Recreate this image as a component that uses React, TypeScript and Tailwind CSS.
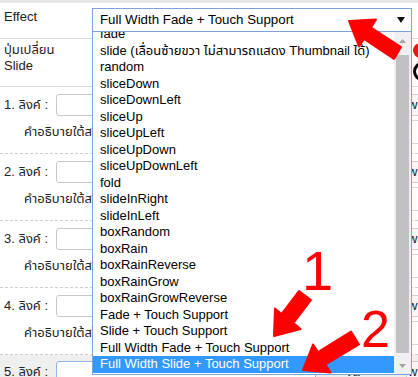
import React from "react";

const effects = [
  "fade",
  "slide (เลื่อนซ้ายขวา ไม่สามารถแสดง Thumbnail ได้)",
  "random",
  "sliceDown",
  "sliceDownLeft",
  "sliceUp",
  "sliceUpLeft",
  "sliceUpDown",
  "sliceUpDownLeft",
  "fold",
  "slideInRight",
  "slideInLeft",
  "boxRandom",
  "boxRain",
  "boxRainReverse",
  "boxRainGrow",
  "boxRainGrowReverse",
  "Fade + Touch Support",
  "Slide + Touch Support",
  "Full Width Fade + Touch Support",
  "Full Width Slide + Touch Support",
];

// แถวลิงค์สไลด์ 1-4
function LinkRow({ n }: { n: number }) {
  return (
    <div className="box-border h-[67px] overflow-hidden border-b border-dashed border-[#cfcfcf] pt-[7px]">
      <div className="flex h-[22px] items-center leading-[22px]">
        <span className="w-[56px] shrink-0 pl-1 whitespace-nowrap">{n}. ลิงค์ :</span>
        <div className="h-[22px] w-[260px] shrink-0 rounded-[3px] border border-[#c9c9c9] bg-white" />
        <span className="ml-[30px] w-[60px] shrink-0 text-[#333]">va</span>
        <div className="h-[22px] w-[60px] shrink-0 border border-[#cfcfcf] bg-[#f7f7f7] pl-[1px] leading-[20px]">
          width
        </div>
      </div>
      <div className="mt-[5px] flex h-[22px] items-center leading-[22px]">
        <span className="w-[387px] shrink-0 pl-[24px] whitespace-nowrap">คำอธิบายใต้สไลด์ :</span>
        <div className="h-[24px] w-[60px] shrink-0 border border-[#d5d5d5] bg-white" />
      </div>
    </div>
  );
}

export default function App() {
  return (
    <div className="relative h-[377px] w-[418px] overflow-hidden bg-white text-[13px] leading-[16px] text-[#222] font-['Liberation_Sans','Noto_Sans_Thai','Noto_Sans',sans-serif]">
      <div className="h-[3px] bg-[#e6e6e6]" />

      {/* Effect */}
      <div className="flex h-[36px] overflow-hidden border-b border-[#dcdcdc]">
        <div className="w-[92px] shrink-0 pl-1 pt-[6px] leading-[16px]">Effect</div>
        <div className="mt-[5px] flex h-[24px] w-[320px] shrink-0 items-center justify-between border border-[#7ea3da] bg-white pl-[7px] pr-[6px] text-[13.3px] text-black">
          <span>Full Width Fade + Touch Support</span>
          <svg width="8" height="6" viewBox="0 0 8 6">
            <polygon points="0,0 8,0 4,6" fill="#111" />
          </svg>
        </div>
      </div>

      {/* ปุ่มเปลี่ยน slide */}
      <div className="flex h-[48px] overflow-hidden border-b border-[#dcdcdc]">
        <div className="w-[92px] shrink-0 pl-1 pt-[3px] leading-[16px]">
          ปุ่มเปลี่ยน
          <br />
          Slide
        </div>
        <div className="ml-[321px] flex shrink-0 flex-col gap-[4px] pt-[4px]">
          <div className="h-[15px] w-[15px] rounded-full bg-[#e01b1b]" />
          <div className="h-[19px] w-[19px] rounded-full border-[3px] border-black" />
        </div>
      </div>

      <LinkRow n={1} />
      <LinkRow n={2} />
      <LinkRow n={3} />
      <LinkRow n={4} />

      {/* แถวที่ 5 (พื้นเทา) */}
      <div className="h-[40px] overflow-hidden bg-[#efefef] pt-[6px]">
        <div className="flex h-[22px] items-center leading-[22px]">
          <span className="w-[56px] shrink-0 pl-1 whitespace-nowrap">5. ลิงค์ :</span>
          <div className="h-[22px] w-[260px] shrink-0 rounded-[3px] border border-[#8fb4e8] bg-white" />
          <span className="ml-[30px] w-[60px] shrink-0 text-[#333]">va</span>
          <div className="h-[22px] w-[60px] shrink-0 border border-[#cfcfcf] bg-[#f7f7f7] pl-[1px] leading-[20px]">
            width
          </div>
        </div>
      </div>

      {/* dropdown list */}
      <div className="absolute left-[92px] top-[32px] flex h-[343px] w-[320px] overflow-hidden border border-t-0 border-[#7ea3da] bg-white text-black">
        <div className="w-[301px] shrink-0 overflow-hidden">
          <div className="-mt-[6px]">
            {effects.map((e, i) => (
              <div
                key={e}
                className={
                  i === effects.length - 1
                    ? "h-[16.5px] whitespace-nowrap bg-[#3399ff] pl-[7px] leading-[16.5px] text-white"
                    : "h-[16.5px] whitespace-nowrap pl-[7px] leading-[16.5px]"
                }
              >
                {e}
              </div>
            ))}
          </div>
        </div>
        <div className="flex w-[17px] shrink-0 flex-col bg-[#f0f0f0]">
          <div className="flex h-[17px] items-center justify-center">
            <svg width="7" height="4" viewBox="0 0 7 4">
              <polygon points="3.5,0 7,4 0,4" fill="#a3a3a3" />
            </svg>
          </div>
          <div className="mx-[2px] mt-[6px] h-[298px] bg-[#c1c1c1]" />
          <div className="mt-auto flex h-[17px] items-center justify-center">
            <svg width="7" height="4" viewBox="0 0 7 4">
              <polygon points="0,0 7,0 3.5,4" fill="#a3a3a3" />
            </svg>
          </div>
        </div>
      </div>

      {/* ลูกศรสีแดง */}
      <svg className="pointer-events-none absolute left-0 top-0" width="418" height="377" viewBox="0 0 418 377">
        <g fill="#ff0000" stroke="#ff0000" strokeWidth="2" strokeLinejoin="round">
          <polygon points="401,47 371,27.5 376,19.5 349,21 359,46.5 364,39 394,59" />
          <polygon points="311,300 293.5,323 300.5,329 274,336 275,308.5 281.5,314 299,291" />
          <polygon points="359,344.5 325.5,364.5 330.5,372.5 303,370 313,344.5 318,352 351,331.5" />
        </g>
        <text x="302" y="290" fontSize="56" fill="#ff0000" fontFamily="Liberation Sans, sans-serif">
          1
        </text>
        <text x="361" y="347" fontSize="52" fill="#ff0000" fontFamily="Liberation Sans, sans-serif">
          2
        </text>
      </svg>
    </div>
  );
}
